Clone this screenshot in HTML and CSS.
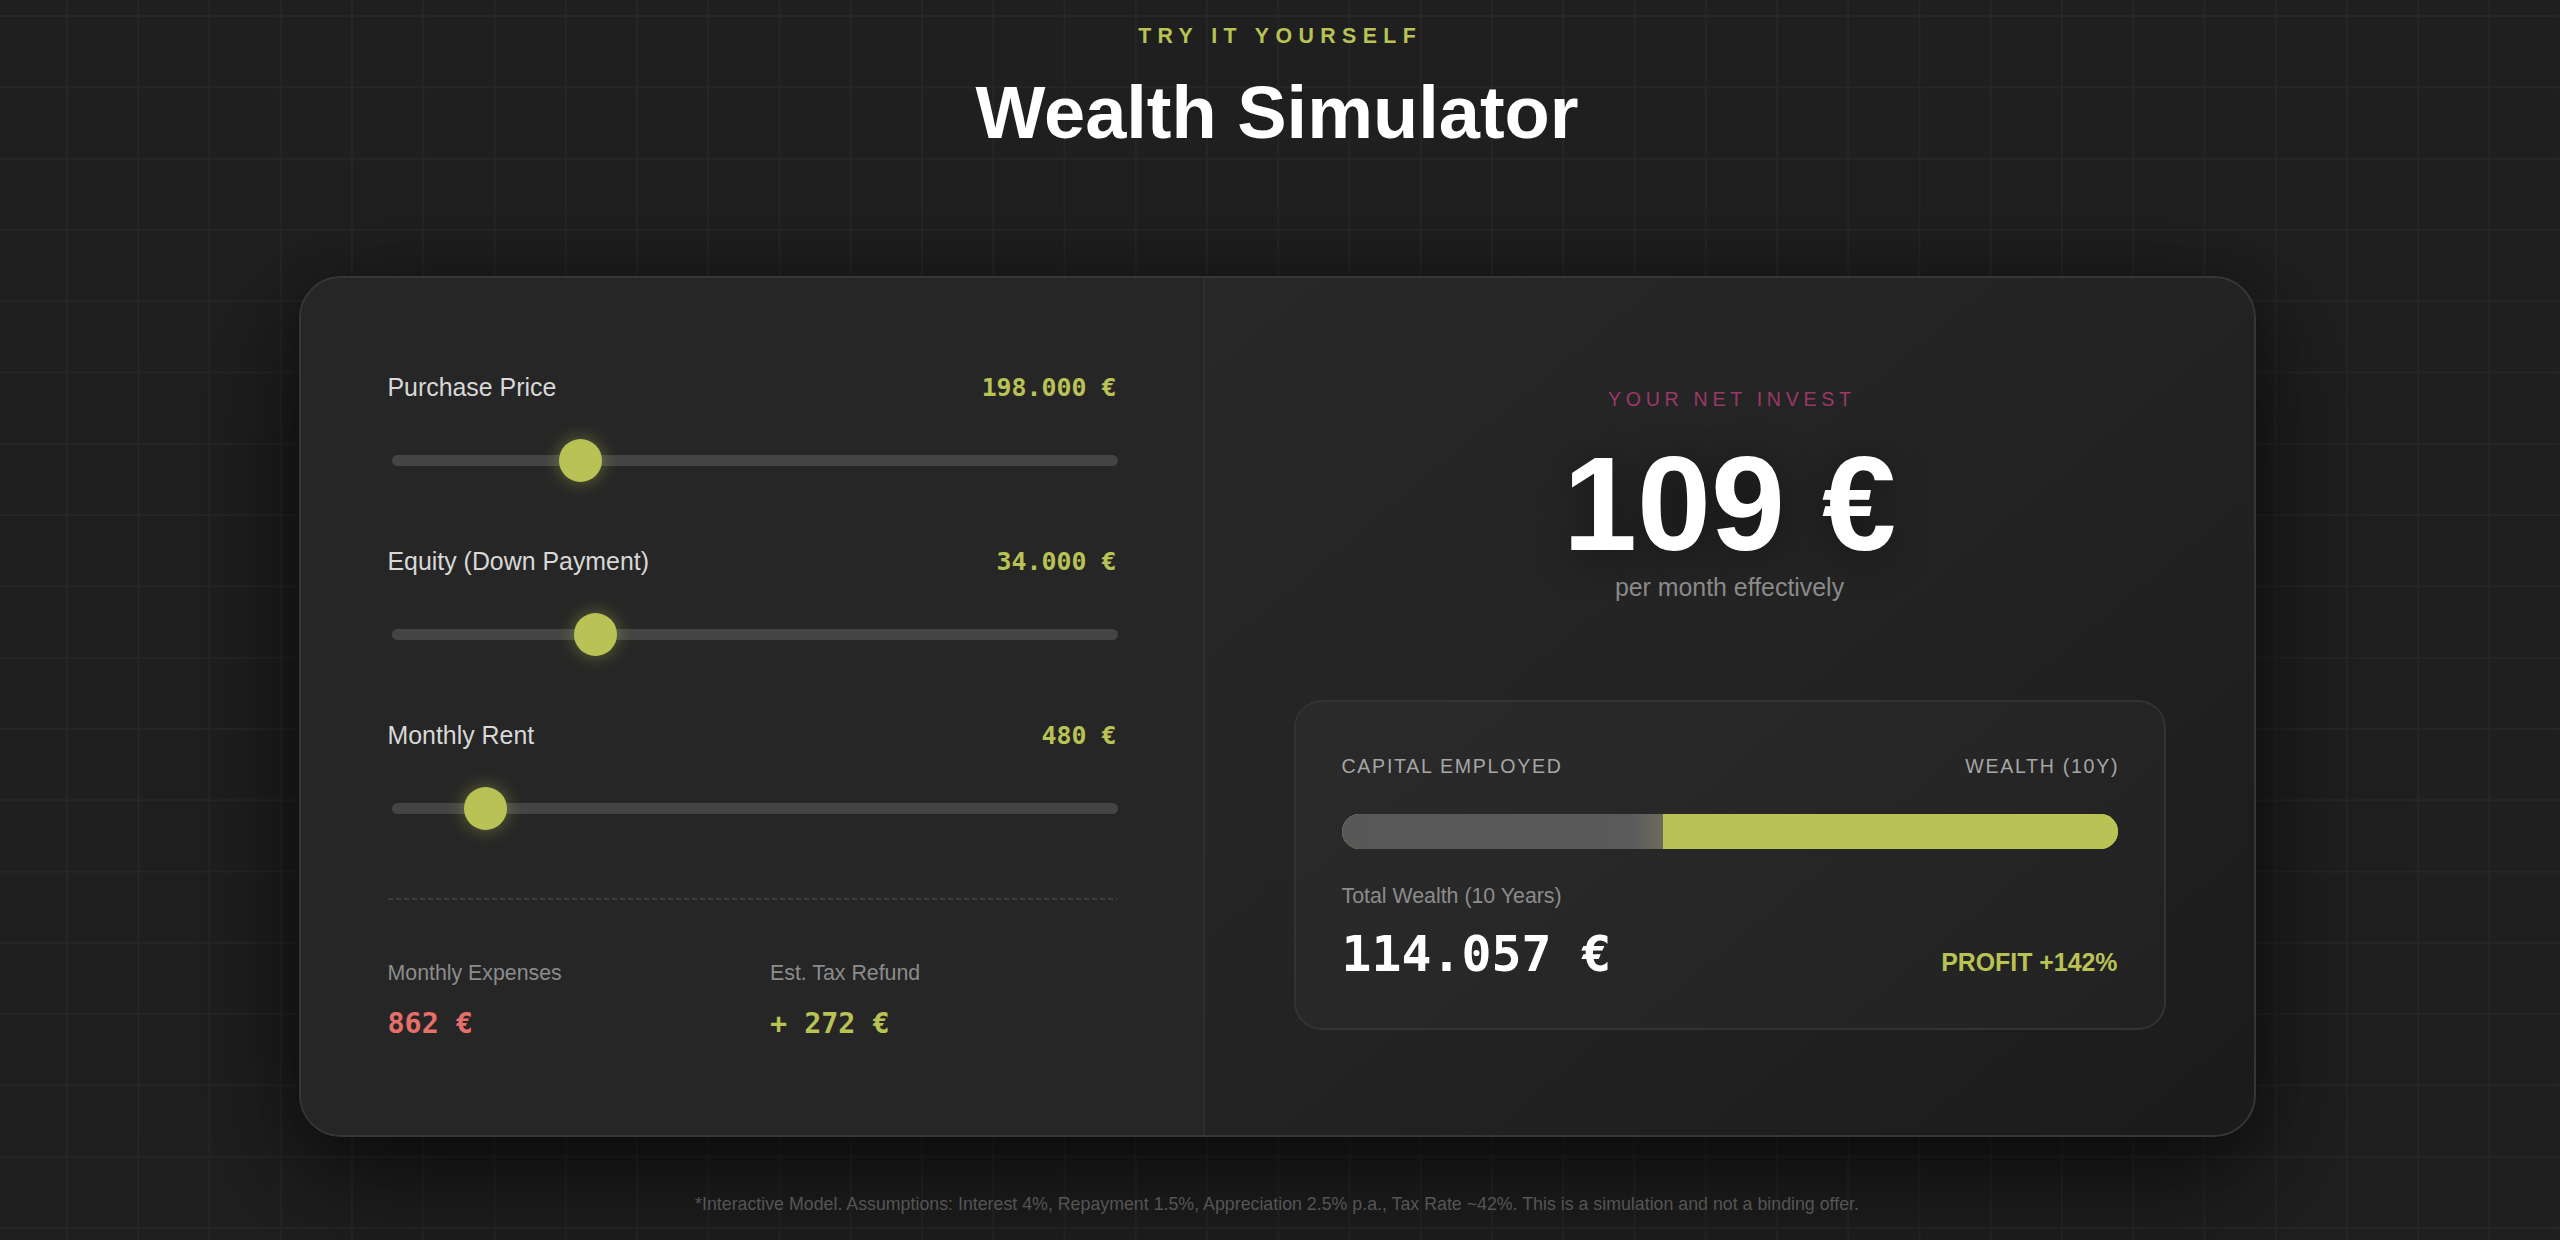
FILE: index.html
```html
<!DOCTYPE html>
<html lang="en">
<head>
<meta charset="utf-8">
<title>Wealth Simulator</title>
<link rel="stylesheet" href="styles.css">
</head>
<body>
<main class="page">
  <header class="intro">
    <p class="eyebrow">TRY IT YOURSELF</p>
    <h1 class="title">Wealth Simulator</h1>
  </header>

  <section class="card">
    <div class="controls">
      <div class="field">
        <div class="field-head">
          <span class="field-label">Purchase Price</span>
          <span class="field-value">198.000 €</span>
        </div>
        <input class="slider" type="range" min="100000" max="500000" step="1000" value="198000" aria-label="Purchase Price">
      </div>
      <div class="field">
        <div class="field-head">
          <span class="field-label">Equity (Down Payment)</span>
          <span class="field-value">34.000 €</span>
        </div>
        <input class="slider" type="range" min="10000" max="100000" step="1000" value="34000" aria-label="Equity">
      </div>
      <div class="field">
        <div class="field-head">
          <span class="field-label">Monthly Rent</span>
          <span class="field-value">480 €</span>
        </div>
        <input class="slider" type="range" min="300" max="2000" step="10" value="480" aria-label="Monthly Rent">
      </div>

      <div class="dashed"></div>

      <div class="stats">
        <div class="stat">
          <div class="stat-label">Monthly Expenses</div>
          <div class="stat-value neg">862 €</div>
        </div>
        <div class="stat">
          <div class="stat-label">Est. Tax Refund</div>
          <div class="stat-value pos">+ 272 €</div>
        </div>
      </div>
    </div>

    <div class="result">
      <p class="net-label">YOUR NET INVEST</p>
      <p class="net-value">109 €</p>
      <p class="net-sub">per month effectively</p>

      <div class="wealth-box">
        <div class="wealth-head">
          <span>CAPITAL EMPLOYED</span>
          <span>WEALTH (10Y)</span>
        </div>
        <div class="bar">
          <div class="bar-capital" style="width: 41.4%"></div>
          <div class="bar-wealth"></div>
        </div>
        <div class="wealth-label">Total Wealth (10 Years)</div>
        <div class="wealth-row">
          <span class="wealth-value">114.057 €</span>
          <span class="profit">PROFIT +142%</span>
        </div>
      </div>
    </div>
  </section>

  <p class="footnote">*Interactive Model. Assumptions: Interest 4%, Repayment 1.5%, Appreciation 2.5% p.a., Tax Rate ~42%. This is a simulation and not a binding offer.</p>
</main>
</body>
</html>
```

FILE: styles.css
```css
* { box-sizing: border-box; }

html, body {
  margin: 0;
  padding: 0;
}

body {
  width: 2560px;
  height: 1240px;
  overflow: hidden;
  background-color: #1f1f1f;
  background-image:
    linear-gradient(to right, #262626 2px, transparent 2px),
    linear-gradient(to bottom, #262626 2px, transparent 2px);
  background-size: 71.25px 71.3px;
  background-position: 66px 15px;
  font-family: "Liberation Sans", Arial, Helvetica, sans-serif;
  color: #fff;
}

.page {
  width: 2554px;
  display: flex;
  flex-direction: column;
  align-items: center;
}

p { margin: 0; }

.intro {
  padding-top: 24px;
  text-align: center;
}

.eyebrow {
  font-size: 21.33px;
  line-height: 25.6px;
  font-weight: 700;
  letter-spacing: 6.4px;
  margin-right: -6.4px;
  color: #b9c255;
}

.title {
  margin: 22px 0 0;
  font-size: 74px;
  line-height: 81.4px;
  font-weight: 700;
  color: #ffffff;
}

.card {
  margin-top: 123px;
  width: 1957px;
  height: 861px;
  display: grid;
  grid-template-columns: 904px 1fr;
  border: 2px solid #363636;
  border-radius: 42px;
  background: #262626;
  overflow: hidden;
  box-shadow: 0 40px 130px rgba(0, 0, 0, 0.6), 0 10px 40px rgba(0, 0, 0, 0.25);
}

/* Left: controls */
.controls {
  padding: 94px 86px 0 87px;
  border-right: 2px solid #2f2f2f;
  background: #262626;
}

.field + .field { margin-top: 64px; }

.field-head {
  display: flex;
  justify-content: space-between;
  align-items: baseline;
  line-height: 30px;
}

.field-label {
  font-size: 24.9px;
  color: #d8d8d8;
}

.field-value {
  font-family: "DejaVu Sans Mono", "Liberation Mono", monospace;
  font-weight: 700;
  font-size: 24.9px;
  color: #b9c255;
}

.slider {
  -webkit-appearance: none;
  appearance: none;
  display: block;
  width: calc(100% - 3px);
  height: 43px;
  margin: 36px 0 0 4px;
  padding: 0;
  background: transparent;
}

.slider::-webkit-slider-runnable-track {
  height: 11px;
  border-radius: 6px;
  background: #444444;
}

.slider::-webkit-slider-thumb {
  -webkit-appearance: none;
  appearance: none;
  width: 43px;
  height: 43px;
  margin-top: -16px;
  border-radius: 50%;
  border: none;
  background: #b9c255;
  box-shadow: 0 0 18px rgba(185, 194, 85, 0.45);
}

.dashed {
  margin-top: 68px;
  height: 2px;
  background-image: repeating-linear-gradient(90deg, #3d3d3d 0 5px, transparent 5px 8px);
}

.stats {
  margin-top: 61px;
  display: grid;
  grid-template-columns: 1fr 1fr;
  column-gap: 36px;
}

.stat-label {
  font-size: 21.33px;
  line-height: 25.6px;
  color: #8c8c8c;
}

.stat-value {
  margin-top: 20px;
  font-family: "DejaVu Sans Mono", "Liberation Mono", monospace;
  font-weight: 700;
  font-size: 28.4px;
  line-height: 34px;
}

.stat-value.neg { color: #e66f69; }
.stat-value.pos { color: #b9c255; }

/* Right: result */
.result {
  padding: 110px 88px 0 89px;
  background: linear-gradient(140deg, #282828 0%, #232323 50%, #1b1b1b 100%);
  text-align: center;
}

.net-label {
  font-size: 19.6px;
  line-height: 23.5px;
  letter-spacing: 4.7px;
  margin-right: -4.7px;
  color: #9c3868;
}

.net-value {
  margin-top: 27px;
  font-size: 133px;
  line-height: 131px;
  font-weight: 700;
  color: #ffffff;
  text-shadow: 0 6px 40px rgba(0, 0, 0, 0.45);
}

.net-sub {
  margin-top: 2px;
  font-size: 24.9px;
  line-height: 30px;
  color: #8a8a8a;
}

.wealth-box {
  margin-top: 98px;
  padding: 53px 46px 44px 46px;
  border: 2px solid #333333;
  border-radius: 28px;
  background: rgba(255, 255, 255, 0.025);
  text-align: left;
}

.wealth-head {
  display: flex;
  justify-content: space-between;
  font-size: 19.6px;
  line-height: 23.5px;
  letter-spacing: 1.7px;
  color: #a6a6a6;
}

.wealth-head span:last-child { margin-right: -1.7px; }

.bar {
  margin-top: 36px;
  height: 35px;
  display: flex;
  border-radius: 18px;
  overflow: hidden;
  background: #b9c255;
}

.bar-capital {
  height: 100%;
  background: linear-gradient(90deg, #585858 0%, #5a5a5a 90%, #6b6c5a 100%);
}

.bar-wealth {
  flex: 1;
  height: 100%;
  background: #b9c255;
}

.wealth-label {
  margin-top: 35px;
  font-size: 21.33px;
  line-height: 25.6px;
  color: #8c8c8c;
}

.wealth-row {
  margin-top: 14px;
  display: flex;
  justify-content: space-between;
  align-items: baseline;
}

.wealth-value {
  font-family: "DejaVu Sans Mono", "Liberation Mono", monospace;
  font-weight: 700;
  font-size: 49.8px;
  line-height: 60px;
  color: #ffffff;
}

.profit {
  font-size: 24.9px;
  font-weight: 700;
  color: #b9c255;
}

.footnote {
  margin-top: 57px;
  font-size: 17.8px;
  line-height: 21px;
  color: #555555;
  text-align: center;
}
```
